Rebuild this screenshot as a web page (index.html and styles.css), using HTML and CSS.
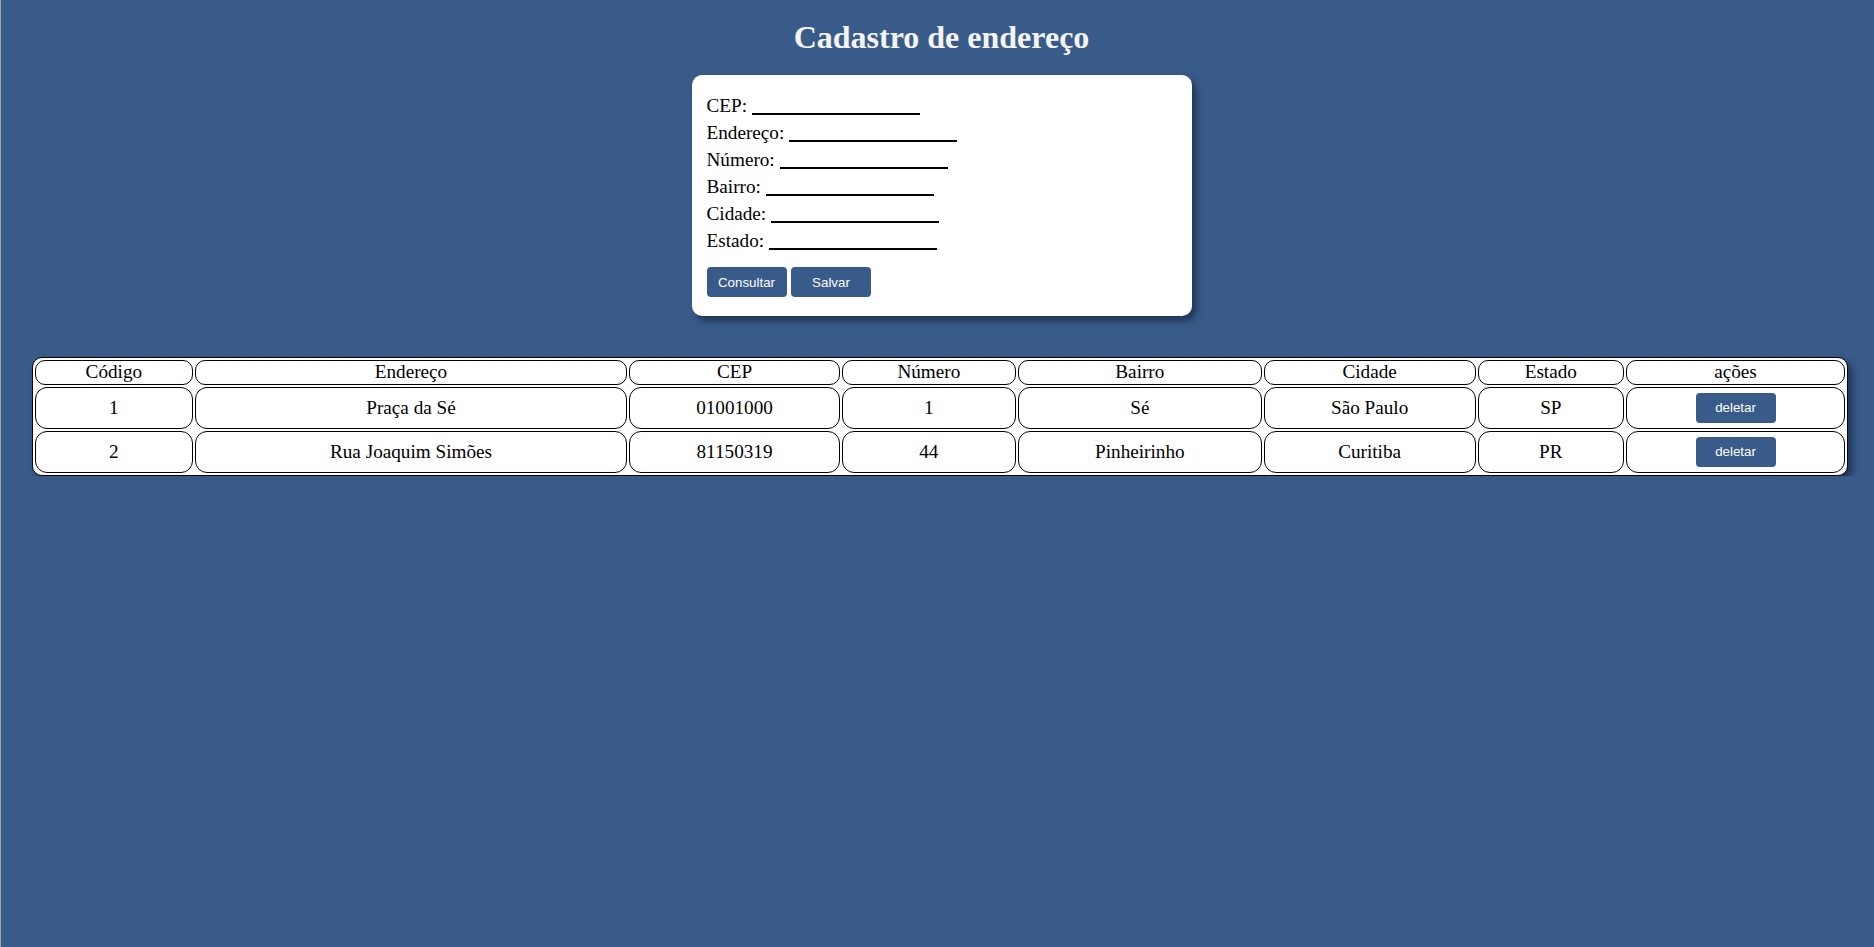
FILE: index.html
```html
<!DOCTYPE html>
<html lang="pt-BR">
<head>
<meta charset="utf-8">
<title>Cadastro de endereço</title>
<link rel="stylesheet" href="styles.css">
</head>
<body>
<h1 class="title">Cadastro de endereço</h1>
<form class="card">
  <div class="field"><label>CEP:</label> <input type="text" class="line-input"></div>
  <div class="field"><label>Endereço:</label> <input type="text" class="line-input"></div>
  <div class="field"><label>Número:</label> <input type="text" class="line-input"></div>
  <div class="field"><label>Bairro:</label> <input type="text" class="line-input"></div>
  <div class="field"><label>Cidade:</label> <input type="text" class="line-input"></div>
  <div class="field"><label>Estado:</label> <input type="text" class="line-input"></div>
  <div class="actions">
    <button type="button" class="btn">Consultar</button>
    <button type="button" class="btn">Salvar</button>
  </div>
</form>
<table class="grid">
  <thead>
    <tr><th>Código</th><th>Endereço</th><th>CEP</th><th>Número</th><th>Bairro</th><th>Cidade</th><th>Estado</th><th>ações</th></tr>
  </thead>
  <tbody>
    <tr><td>1</td><td>Praça da Sé</td><td>01001000</td><td>1</td><td>Sé</td><td>São Paulo</td><td>SP</td><td><button type="button" class="btn">deletar</button></td></tr>
    <tr><td>2</td><td>Rua Joaquim Simões</td><td>81150319</td><td>44</td><td>Pinheirinho</td><td>Curitiba</td><td>PR</td><td><button type="button" class="btn">deletar</button></td></tr>
  </tbody>
</table>
</body>
</html>
```
FILE: styles.css
```css
html {
  box-sizing: border-box;
  min-height: 100%;
  border-left: 1px solid #a3a3a3;
}
body {
  margin: 0 0 0 8px;
  background: #395b8a;
  font-family: "Liberation Serif", "Times New Roman", serif;
  color: #000;
}
.title {
  margin: 19px 0 19px;
  font-size: 32px;
  font-weight: bold;
  text-align: center;
  color: #f4f4f4;
}
.card {
  box-sizing: border-box;
  width: 500px;
  margin: 0 auto;
  padding: 17px 15px 19px;
  background: #fff;
  border-radius: 10px;
  box-shadow: 4px 5px 7px rgba(10, 20, 40, 0.55);
  font-size: 19.2px;
}
.field {
  line-height: 27px;
}
.line-input {
  width: 168px;
  margin: 0;
  padding: 0;
  border: none;
  border-bottom: 2px solid #000;
  outline: none;
  font-family: "Liberation Sans", Arial, sans-serif;
  font-size: 13.33px;
  vertical-align: 2px;
  background: transparent;
}
.actions {
  display: flex;
  gap: 4.5px;
  margin-top: 13px;
}
.btn {
  width: 80px;
  height: 30px;
  padding: 0;
  border: none;
  border-radius: 4px;
  background: #395b8a;
  color: #fff;
  font-family: "Liberation Sans", Arial, sans-serif;
  font-size: 13.33px;
}
.grid {
  width: calc(100% - 49px);
  margin: 41px 26px 0 23px;
  border: 1px solid #000;
  border-radius: 10px;
  border-spacing: 2px;
  background: #fff;
  box-shadow: 4px 5px 7px rgba(10, 20, 40, 0.55);
  font-size: 19.2px;
}
.grid th,
.grid td {
  border: 1px solid #000;
  border-radius: 10px;
  text-align: center;
  vertical-align: middle;
}
.grid th {
  font-weight: normal;
  padding: 0 1px;
  line-height: 22.5px;
}
.grid td {
  padding: 5px 1px;
  line-height: 22px;
  border-radius: 12px;
}
.grid td .btn {
  display: inline-block;
  vertical-align: middle;
}
```
